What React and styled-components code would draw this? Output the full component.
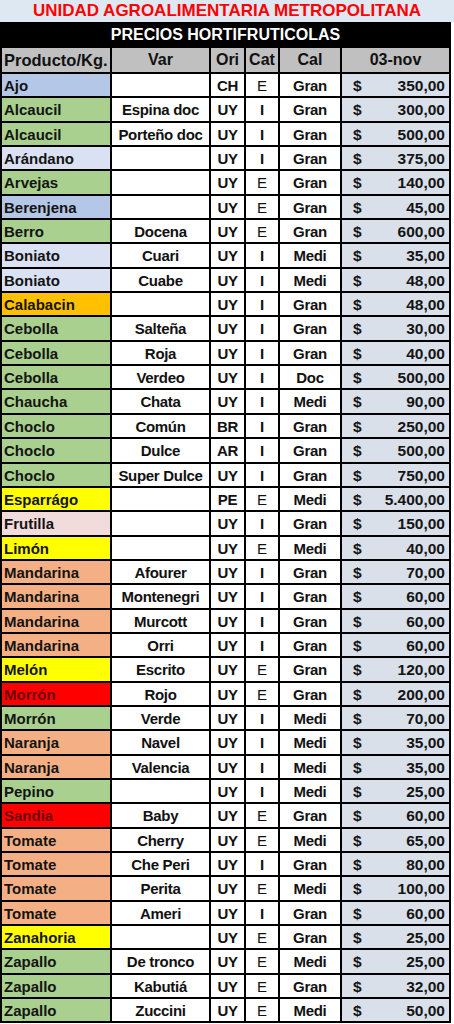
import React from "react";
import styled, { createGlobalStyle } from "styled-components";

const Global = createGlobalStyle`
  html, body { margin: 0; padding: 0; background: #ffffff; }
  body { font-family: "Liberation Sans", Arial, sans-serif; }
`;

const COLORS = {
  blue: "#b4c7e7",
  green: "#a9d08e",
  gray: "#d9e1f2",
  orange: "#ffc000",
  yellow: "#ffff00",
  pink: "#f2dcdb",
  salmon: "#f4b084",
  red: "#ff0000",
};

const rows = [
  ["Ajo", "blue", "", "CH", "E", "Gran", "350,00"],
  ["Alcaucil", "green", "Espina doc", "UY", "I", "Gran", "300,00"],
  ["Alcaucil", "green", "Porteño doc", "UY", "I", "Gran", "500,00"],
  ["Arándano", "gray", "", "UY", "I", "Gran", "375,00"],
  ["Arvejas", "green", "", "UY", "E", "Gran", "140,00"],
  ["Berenjena", "blue", "", "UY", "E", "Gran", "45,00"],
  ["Berro", "green", "Docena", "UY", "E", "Gran", "600,00"],
  ["Boniato", "gray", "Cuari", "UY", "I", "Medi", "35,00"],
  ["Boniato", "gray", "Cuabe", "UY", "I", "Medi", "48,00"],
  ["Calabacin", "orange", "", "UY", "I", "Gran", "48,00"],
  ["Cebolla", "green", "Salteña", "UY", "I", "Gran", "30,00"],
  ["Cebolla", "green", "Roja", "UY", "I", "Gran", "40,00"],
  ["Cebolla", "green", "Verdeo", "UY", "I", "Doc", "500,00"],
  ["Chaucha", "green", "Chata", "UY", "I", "Medi", "90,00"],
  ["Choclo", "green", "Común", "BR", "I", "Gran", "250,00"],
  ["Choclo", "green", "Dulce", "AR", "I", "Gran", "500,00"],
  ["Choclo", "green", "Super Dulce", "UY", "I", "Gran", "750,00"],
  ["Esparrágo", "yellow", "", "PE", "E", "Medi", "5.400,00"],
  ["Frutilla", "pink", "", "UY", "I", "Gran", "150,00"],
  ["Limón", "yellow", "", "UY", "E", "Medi", "40,00"],
  ["Mandarina", "salmon", "Afourer", "UY", "I", "Gran", "70,00"],
  ["Mandarina", "salmon", "Montenegri", "UY", "I", "Gran", "60,00"],
  ["Mandarina", "salmon", "Murcott", "UY", "I", "Gran", "60,00"],
  ["Mandarina", "salmon", "Orri", "UY", "I", "Gran", "60,00"],
  ["Melón", "yellow", "Escrito", "UY", "E", "Gran", "120,00"],
  ["Morrón", "red", "Rojo", "UY", "E", "Gran", "200,00"],
  ["Morrón", "green", "Verde", "UY", "I", "Medi", "70,00"],
  ["Naranja", "salmon", "Navel", "UY", "I", "Medi", "35,00"],
  ["Naranja", "salmon", "Valencia", "UY", "I", "Medi", "35,00"],
  ["Pepino", "green", "", "UY", "I", "Medi", "25,00"],
  ["Sandia", "red", "Baby", "UY", "E", "Gran", "60,00"],
  ["Tomate", "salmon", "Cherry", "UY", "E", "Medi", "65,00"],
  ["Tomate", "salmon", "Che Peri", "UY", "I", "Gran", "80,00"],
  ["Tomate", "salmon", "Perita", "UY", "E", "Medi", "100,00"],
  ["Tomate", "salmon", "Ameri", "UY", "I", "Gran", "60,00"],
  ["Zanahoria", "yellow", "", "UY", "E", "Gran", "25,00"],
  ["Zapallo", "green", "De tronco", "UY", "E", "Medi", "25,00"],
  ["Zapallo", "green", "Kabutiá", "UY", "E", "Gran", "32,00"],
  ["Zapallo", "green", "Zuccini", "UY", "E", "Medi", "50,00"],
];

const Page = styled.div`
  width: 454px;
  background: #ffffff;
`;

const Title = styled.div`
  height: 22px;
  width: 454px;
  background: #dde8f2;
  color: #ff0000;
  font-weight: 700;
  font-size: 17px;
  line-height: 22px;
  text-align: center;
`;

const Sheet = styled.div`
  width: 451px;
  display: grid;
  grid-template-columns: 108px 97px 33px 32px 60px 107px;
  grid-template-rows: 24px 24px;
  grid-auto-rows: 22.35px;
  gap: 2px;
  padding: 0 2px 2px 2px;
  box-sizing: border-box;
  background: #000000;
`;

const Band = styled.div`
  grid-column: 1 / -1;
  background: #000000;
  color: #ffffff;
  font-weight: 700;
  font-size: 16px;
  line-height: 25px;
  text-align: center;
`;

const Head = styled.div`
  background: #c0c0c0;
  color: #111111;
  font-weight: 700;
  font-size: ${(p) => (p.$left ? "16.5px" : "16px")};
  line-height: 24px;
  text-align: ${(p) => (p.$left ? "left" : "center")};
  padding-left: ${(p) => (p.$left ? "2px" : "0")};
  white-space: nowrap;
  overflow: hidden;
`;

const Product = styled.div`
  background: ${(p) => COLORS[p.$tone]};
  color: ${(p) => (p.$tone === "red" ? "#6e0000" : "#141414")};
  font-weight: 700;
  font-size: 15px;
  line-height: 23px;
  padding-left: 2px;
  white-space: nowrap;
`;

const Cell = styled.div`
  background: #ffffff;
  color: #111111;
  font-weight: ${(p) => (p.$thin ? 400 : 700)};
  font-size: 15px;
  line-height: 23px;
  text-align: center;
  letter-spacing: ${(p) => (p.$tight ? "-0.3px" : "0")};
  white-space: nowrap;
  overflow: hidden;
`;

const Price = styled.div`
  background: #d9e0ea;
  color: #141414;
  font-weight: 700;
  font-size: 15.5px;
  line-height: 23px;
  display: flex;
  justify-content: space-between;
  padding: 0 4px 0 11px;
  white-space: nowrap;
`;

export default function App() {
  return (
    <Page>
      <Global />
      <Title>UNIDAD AGROALIMENTARIA METROPOLITANA</Title>
      <Sheet>
        <Band>PRECIOS HORTIFRUTICOLAS</Band>
        <Head $left>Producto/Kg.</Head>
        <Head>Var</Head>
        <Head>Ori</Head>
        <Head>Cat</Head>
        <Head>Cal</Head>
        <Head>03-nov</Head>
        {rows.map(([name, tone, v, ori, cat, cal, price], i) => (
          <React.Fragment key={i}>
            <Product $tone={tone}>{name}</Product>
            <Cell $tight>{v}</Cell>
            <Cell $tight>{ori}</Cell>
            <Cell $thin={cat === "E"}>{cat}</Cell>
            <Cell $tight>{cal}</Cell>
            <Price>
              <span>$</span>
              <span>{price}</span>
            </Price>
          </React.Fragment>
        ))}
      </Sheet>
    </Page>
  );
}
